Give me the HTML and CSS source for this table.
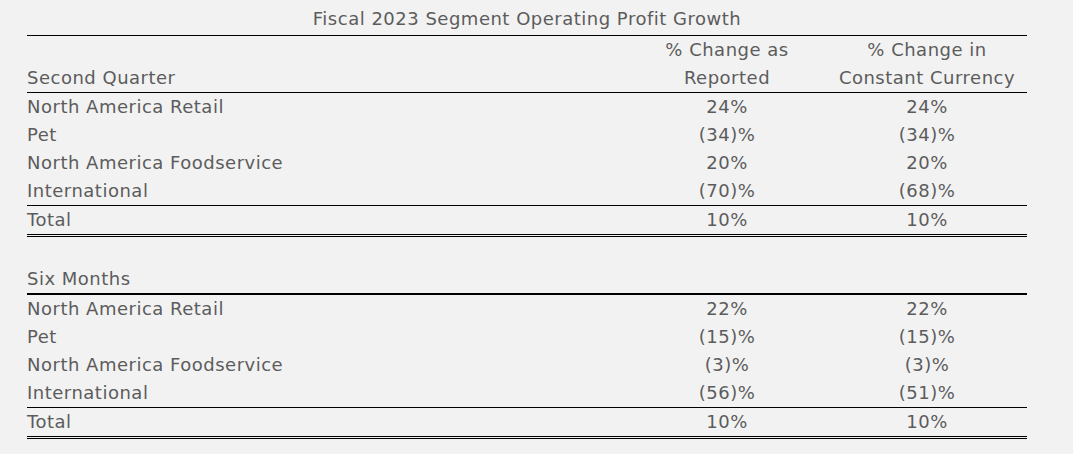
FILE: index.html
```html
<!DOCTYPE html>
<html lang="en">
<head>
<meta charset="utf-8">
<title>Fiscal 2023 Segment Operating Profit Growth</title>
<link rel="stylesheet" href="styles.css">
</head>
<body>
<div class="report">
  <div class="title">Fiscal 2023 Segment Operating Profit Growth</div>
  <div class="row head">
    <div class="label">Second Quarter</div>
    <div class="num">% Change as<br>Reported</div>
    <div class="num">% Change in<br>Constant Currency</div>
  </div>
  <div class="row"><div class="label">North America Retail</div><div class="num">24%</div><div class="num">24%</div></div>
  <div class="row"><div class="label">Pet</div><div class="num">(34)%</div><div class="num">(34)%</div></div>
  <div class="row"><div class="label">North America Foodservice</div><div class="num">20%</div><div class="num">20%</div></div>
  <div class="row last"><div class="label">International</div><div class="num">(70)%</div><div class="num">(68)%</div></div>
  <div class="row total"><div class="label">Total</div><div class="num">10%</div><div class="num">10%</div></div>
  <div class="spacer"></div>
  <div class="row section"><div class="label">Six Months</div><div class="num"></div><div class="num"></div></div>
  <div class="row"><div class="label">North America Retail</div><div class="num">22%</div><div class="num">22%</div></div>
  <div class="row"><div class="label">Pet</div><div class="num">(15)%</div><div class="num">(15)%</div></div>
  <div class="row"><div class="label">North America Foodservice</div><div class="num">(3)%</div><div class="num">(3)%</div></div>
  <div class="row last"><div class="label">International</div><div class="num">(56)%</div><div class="num">(51)%</div></div>
  <div class="row total"><div class="label">Total</div><div class="num">10%</div><div class="num">10%</div></div>
</div>
</body>
</html>
```
FILE: styles.css
```css
html, body {
  margin: 0;
  padding: 0;
  background: #f2f2f2;
}
body {
  font-family: "DejaVu Sans", "Liberation Sans", sans-serif;
  font-weight: 400;
  font-size: 18px;
  letter-spacing: 0.5px;
  color: #5c5c5c;
}
.report {
  width: 1000px;
  margin-left: 27px;
  padding-top: 5px;
}
.title {
  line-height: 28px;
  padding-bottom: 2px;
  text-align: center;
  border-bottom: 1px solid #000;
}
.row {
  display: grid;
  grid-template-columns: 600px 200px 200px;
  line-height: 28px;
  height: 28px;
}
.row.head {
  height: 56px;
  border-bottom: 1px solid #000;
}
.row.head .label {
  align-self: end;
}
.num {
  text-align: center;
}
.row.last {
  border-bottom: 1px solid #000;
}
.row.total {
  border-bottom: 3px double #000;
}
.spacer {
  height: 28px;
}
.row.section {
  border-bottom: 2px solid #000;
}
```
